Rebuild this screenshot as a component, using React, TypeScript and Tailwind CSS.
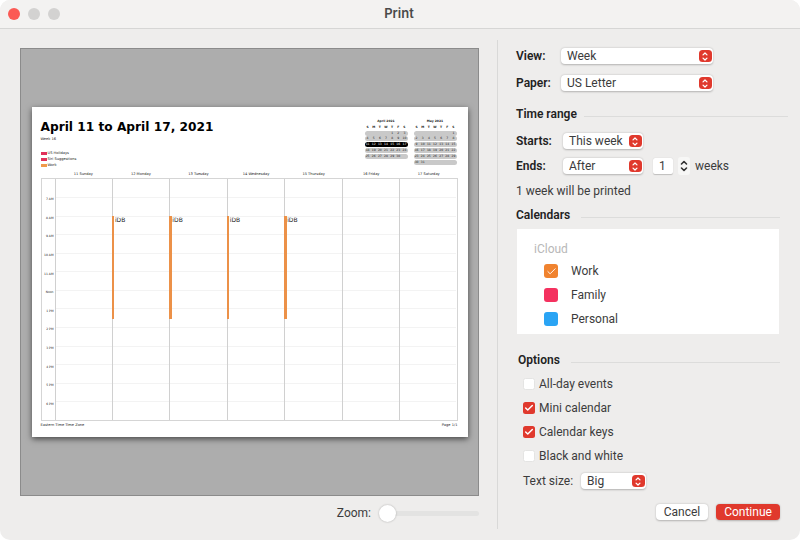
import { Check } from 'lucide-react'

const hours = ['7 AM', '8 AM', '9 AM', '10 AM', '11 AM', 'Noon', '1 PM', '2 PM', '3 PM', '4 PM', '5 PM', '6 PM']
const days = ['11 Sunday', '12 Monday', '13 Tuesday', '14 Wednesday', '15 Thursday', '16 Friday', '17 Saturday']

const april = [
  ['', '', '', '', '1', '2', '3'],
  ['4', '5', '6', '7', '8', '9', '10'],
  ['11', '12', '13', '14', '15', '16', '17'],
  ['18', '19', '20', '21', '22', '23', '24'],
  ['25', '26', '27', '28', '29', '30', ''],
]
const may = [
  ['', '', '', '', '', '', '1'],
  ['2', '3', '4', '5', '6', '7', '8'],
  ['9', '10', '11', '12', '13', '14', '15'],
  ['16', '17', '18', '19', '20', '21', '22'],
  ['23', '24', '25', '26', '27', '28', '29'],
  ['30', '31', '', '', '', '', ''],
]

function UpDown({ className }: { className: string }) {
  return (
    <svg viewBox="0 0 10 14" className={className} fill="none" stroke="currentColor" strokeWidth="1.6" strokeLinecap="round" strokeLinejoin="round">
      <path d="M2.5 5 5 2.5 7.5 5" />
      <path d="M2.5 9 5 11.5 7.5 9" />
    </svg>
  )
}

function Select({ label, width }: { label: string; width: string }) {
  return (
    <div className={`${width} h-4 bg-white rounded-[4px] shadow-[0_0.5px_2px_rgba(0,0,0,0.25)] flex items-center justify-between pl-[6px] pr-[1.5px] text-[12px] text-[#3c3c3c]`}>
      <span>{label}</span>
      <span className="w-[12.5px] h-[12.5px] bg-[#e0392d] rounded-[3.5px] flex items-center justify-center text-white">
        <UpDown className="w-[8px] h-[11px]" />
      </span>
    </div>
  )
}

function Section({ title, line }: { title: string; line: string }) {
  return (
    <div className="flex items-center">
      <span className="text-[12px] font-semibold text-[#222222] leading-[16px]">{title}</span>
      <div className={`h-px flex-1 bg-[#dcdcdb] mt-[5px] ${line}`}></div>
    </div>
  )
}

function Option({ label, checked }: { label: string; checked?: boolean }) {
  return (
    <div className="h-6 flex items-center gap-[4px] text-[12px] text-[#3c3c3c]">
      {checked ? (
        <span className="w-3 h-3 rounded-[2.5px] bg-[#e0392d] flex items-center justify-center text-white">
          <Check className="w-[10px] h-[10px]" strokeWidth={3.5} />
        </span>
      ) : (
        <span className="w-3 h-3 rounded-[2.5px] bg-white border border-[#e4e4e3]"></span>
      )}
      <span>{label}</span>
    </div>
  )
}

function Swatch({ label, color, checked }: { label: string; color: string; checked?: boolean }) {
  return (
    <div className="h-6 flex items-center pl-[27px] gap-[13px] text-[12px] text-[#3c3c3c]">
      <span className={`w-[14px] h-[14px] rounded-[3px] flex items-center justify-center text-white ${color}`}>
        {checked && <Check className="w-[11px] h-[11px]" strokeWidth={2} />}
      </span>
      <span>{label}</span>
    </div>
  )
}

function MiniCal({ title, rows, current }: { title: string; rows: string[][]; current?: number }) {
  return (
    <div className="w-[43px] text-[3px] leading-[5.8px] text-center text-[#222222]">
      <div className="font-bold">{title}</div>
      <div className="grid grid-cols-7 font-bold">
        {['S', 'M', 'T', 'W', 'T', 'F', 'S'].map((d, i) => <span key={i}>{d}</span>)}
      </div>
      {rows.map((row, i) => (
        <div key={i} className={`grid grid-cols-7 h-[5px] mb-[0.8px] leading-[5px] rounded-[2.5px] ${i === current ? 'bg-black text-white' : 'bg-[#c9c9c9]'}`}>
          {row.map((d, j) => <span key={j}>{d}</span>)}
        </div>
      ))}
    </div>
  )
}

function Paper() {
  return (
    <div className="w-[436px] h-[330px] bg-white opacity-[0.999] shadow-[0_2px_6px_rgba(0,0,0,0.6)] flex flex-col pl-[9px] pr-[10px] pt-[13px] text-[#222222] font-['DejaVu_Sans',sans-serif]">
      <div className="flex h-[52px]">
        <div className="flex-1">
          <div className="text-[12.2px] leading-[14px] font-bold text-black">April 11 to April 17, 2021</div>
          <div className="text-[3.6px] leading-[5px] mt-[3px]">Week 16</div>
          <div className="mt-[8px] flex flex-col text-[3.6px] leading-[6px]">
            <div className="flex items-center gap-[1px]"><span className="w-[6px] h-[3px] bg-[#e0305a]"></span>US Holidays</div>
            <div className="flex items-center gap-[1px]"><span className="w-[6px] h-[3px] bg-[#e0305a]"></span>Siri Suggestions</div>
            <div className="flex items-center gap-[1px]"><span className="w-[6px] h-[3px] bg-[#f09a4a]"></span>Work</div>
          </div>
        </div>
        <div className="flex gap-[6px] mr-[1px] -mt-[1px]">
          <MiniCal title="April 2021" rows={april} current={2} />
          <MiniCal title="May 2021" rows={may} />
        </div>
      </div>
      <div className="flex pl-[14px] h-[6px] text-[3.6px] leading-[5px] text-center">
        {days.map((d) => <div key={d} className="flex-1">{d}</div>)}
      </div>
      <div className="h-[243px] border border-[#d5d5d5] flex">
        <div className="w-[13px] flex flex-col pt-[11px] text-[3px] text-right">
          {hours.map((h) => <div key={h} className="h-[18.65px] leading-[18.65px] pr-[1px]">{h}</div>)}
        </div>
        {days.map((d, i) => (
          <div key={d} className="flex-1 border-l border-[#d0d0d0] relative flex flex-col pt-[18px]">
            {hours.map((h) => <div key={h} className="h-[18.65px] border-t border-[#f3f3f3]"></div>)}
            {i >= 1 && i <= 4 && (
              <div className="absolute left-[-1px] top-[37px] w-[2.5px] h-[103px] bg-[#ec9148]">
                <span className="absolute left-[3px] top-0 text-[6px] leading-[7px] text-[#222222]">iDB</span>
              </div>
            )}
          </div>
        ))}
      </div>
      <div className="flex justify-between text-[3.6px] leading-[5px] mt-[2px]">
        <span>Eastern Time Time Zone</span>
        <span>Page 1/1</span>
      </div>
    </div>
  )
}

export default function App() {
  return (
    <div className="w-[800px] h-[540px] bg-white font-['Roboto',sans-serif]">
      <div className="w-full h-full bg-[#eeedec] rounded-[10px] overflow-hidden flex flex-col">
        {/* Title bar */}
        <div className="h-[29px] bg-[#f3f2f1] border-b border-[#d6d6d5] flex items-center relative">
          <div className="flex gap-[8px] pl-[8px]">
            <span className="w-3 h-3 rounded-full bg-[#fb5a55]"></span>
            <span className="w-3 h-3 rounded-full bg-[#d3d2d1]"></span>
            <span className="w-3 h-3 rounded-full bg-[#d3d2d1]"></span>
          </div>
          <div className="absolute inset-x-0 text-center text-[13px] font-semibold text-[#4a4a4a] font-['Inter',sans-serif] pr-[2px]">Print</div>
        </div>

        <div className="flex-1 flex">
          {/* Preview side */}
          <div className="w-[497px] shrink-0 pl-5 pr-[18px] pt-[19px] flex flex-col">
            <div className="h-[448px] bg-[#adadad] border border-[#8b8b8b] flex items-center justify-center">
              <Paper />
            </div>
            <div className="flex items-center justify-end mt-[8px] h-[18px]">
              <span className="text-[12px] text-[#3c3c3c] mr-[9px]">Zoom:</span>
              <div className="w-[99px] h-[5px] bg-[#e3e3e2] rounded-full relative">
                <span className="absolute -left-[1px] -top-[6px] w-[17px] h-[17px] rounded-full bg-white shadow-[0_0_2px_rgba(0,0,0,0.3)]"></span>
              </div>
            </div>
          </div>

          {/* Settings side */}
          <div className="flex-1 min-w-0 my-[11px] border-l border-[#d9d9d8] pl-[18px] pr-[20px] pt-[7px] flex flex-col">
            <div className="flex items-center h-4 mt-[1px]">
              <span className="w-[45px] text-[12px] font-semibold text-[#222222]">View:</span>
              <Select label="Week" width="w-[152px]" />
            </div>
            <div className="flex items-center h-4 mt-[11px]">
              <span className="w-[45px] text-[12px] font-semibold text-[#222222]">Paper:</span>
              <Select label="US Letter" width="w-[152px]" />
            </div>

            <div className="mt-[15px]"><Section title="Time range" line="ml-[7px] -mr-[8px]" /></div>
            <div className="flex items-center h-4 mt-[11px]">
              <span className="w-[47px] text-[12px] font-semibold text-[#222222]">Starts:</span>
              <Select label="This week" width="w-[80px]" />
            </div>
            <div className="flex items-center h-4 mt-[9px]">
              <span className="w-[47px] text-[12px] font-semibold text-[#222222]">Ends:</span>
              <Select label="After" width="w-[80px]" />
              <div className="w-5 h-4 ml-[10px] bg-white shadow-[0_0.5px_1px_rgba(0,0,0,0.2)] rounded-[2px] pl-[6px] text-[12px] leading-4 text-[#3c3c3c]">1</div>
              <span className="w-3 h-[18px] ml-[5px] bg-[#f7f7f6] rounded-[3px] text-[#333333] flex items-center justify-center">
                <UpDown className="w-[10px] h-[18px]" />
              </span>
              <span className="ml-[5px] text-[12px] text-[#3c3c3c]">weeks</span>
            </div>
            <div className="mt-[9px] text-[12px] leading-4 text-[#3c3c3c]">1 week will be printed</div>

            <div className="mt-[8px]"><Section title="Calendars" line="ml-[11px]" /></div>
            <div className="mt-[6px] ml-px w-[262px] h-[105px] bg-white pt-[12px]">
              <div className="pl-[17px] text-[12px] leading-4 text-[#b8b8b8] mb-[2px]">iCloud</div>
              <Swatch label="Work" color="bg-[#f0832f]" checked />
              <Swatch label="Family" color="bg-[#f4315f]" />
              <Swatch label="Personal" color="bg-[#2aa4f4]" />
            </div>

            <div className="mt-[18px] ml-[2px]"><Section title="Options" line="ml-[11px]" /></div>
            <div className="pl-[7px] mt-[4px]">
              <Option label="All-day events" />
              <Option label="Mini calendar" checked />
              <Option label="Calendar keys" checked />
              <Option label="Black and white" />
              <div className="flex items-center h-4 mt-[5px] text-[12px] text-[#3c3c3c]">
                <span className="w-[58px]">Text size:</span>
                <Select label="Big" width="w-[65px]" />
              </div>
            </div>
            <div className="flex justify-end gap-[8px] mt-[15px]">
              <button className="w-[52px] h-4 bg-white rounded-[4px] shadow-[0_0.5px_2px_rgba(0,0,0,0.25)] text-[12px] leading-4 text-[#3c3c3c]">Cancel</button>
              <button className="w-[64px] h-4 bg-[#e0392d] rounded-[4px] shadow-[0_0.5px_2px_rgba(0,0,0,0.25)] text-[12px] leading-4 text-white">Continue</button>
            </div>
          </div>
        </div>
      </div>
    </div>
  )
}
